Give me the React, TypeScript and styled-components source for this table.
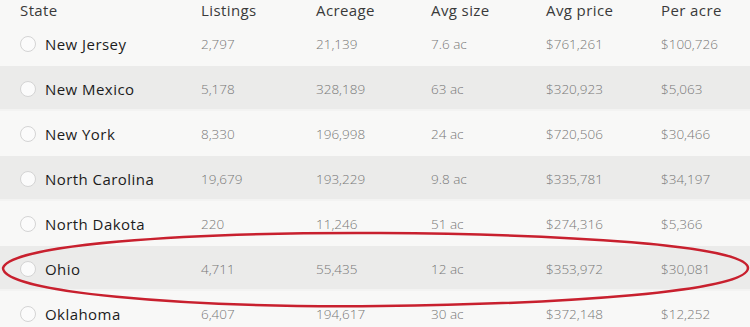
import styled, { createGlobalStyle } from "styled-components";

const rows = [
  ["New Jersey", "2,797", "21,139", "7.6 ac", "$761,261", "$100,726"],
  ["New Mexico", "5,178", "328,189", "63 ac", "$320,923", "$5,063"],
  ["New York", "8,330", "196,998", "24 ac", "$720,506", "$30,466"],
  ["North Carolina", "19,679", "193,229", "9.8 ac", "$335,781", "$34,197"],
  ["North Dakota", "220", "11,246", "51 ac", "$274,316", "$5,366"],
  ["Ohio", "4,711", "55,435", "12 ac", "$353,972", "$30,081"],
  ["Oklahoma", "6,407", "194,617", "30 ac", "$372,148", "$12,252"],
];

const headers = ["State", "Listings", "Acreage", "Avg size", "Avg price", "Per acre"];

const GlobalStyle = createGlobalStyle`
  * { box-sizing: border-box; }
  body {
    margin: 0;
    background: #f8f8f7;
    font-family: "Open Sans", "Noto Sans", sans-serif;
  }
`;

const Page = styled.div`
  position: relative;
  width: 750px;
  height: 327px;
  overflow: hidden;
  background: #f8f8f7;
`;

const Grid = styled.div`
  display: grid;
  grid-template-columns: 201px repeat(5, 115px);
`;

const Row = styled.div<{ $shaded?: boolean; $head?: boolean }>`
  display: contents;
  & > div {
    height: ${(p) => (p.$head ? "21px" : "45px")};
    background: ${(p) => (p.$shaded ? "#ebebea" : "#f8f8f7")};
    box-shadow: ${(p) => (p.$shaded ? "inset 0 -2px 0 #f3f3f2" : "none")};
  }
`;

const HeadCell = styled.div<{ $first?: boolean }>`
  display: flex;
  align-items: center;
  padding-left: ${(p) => (p.$first ? "20px" : "0")};
  font-size: 15px;
  letter-spacing: 0.4px;
  color: #3a3a3a;
  padding-bottom: 2px;
`;

const StateCell = styled.div`
  display: flex;
  align-items: center;
  gap: 9px;
  padding-left: 20px;
  font-size: 15px;
  letter-spacing: 0.45px;
  color: #1c1c1c;
`;

const Radio = styled.span`
  width: 16px;
  height: 16px;
  border-radius: 50%;
  border: 1px solid #d4d4d4;
  background: #fbfbfb;
  flex-shrink: 0;
`;

const NumCell = styled.div`
  display: flex;
  align-items: center;
  font-size: 13.5px;
  color: #787878;
  font-weight: 300;
`;

const Ring = styled.svg`
  position: absolute;
  left: 0;
  top: 0;
  pointer-events: none;
`;

export default function App() {
  return (
    <Page>
      <GlobalStyle />
      <Grid>
        <Row $head>
          {headers.map((h, i) => (
            <HeadCell key={h} $first={i === 0}>
              {h}
            </HeadCell>
          ))}
        </Row>
        {rows.map((r, i) => (
          <Row key={r[0]} $shaded={i % 2 === 1}>
            <StateCell>
              <Radio />
              {r[0]}
            </StateCell>
            {r.slice(1).map((v, j) => (
              <NumCell key={j}>{v}</NumCell>
            ))}
          </Row>
        ))}
      </Grid>
      <Ring width="750" height="327" viewBox="0 0 750 327">
        <path
          d="M 3 268 C 10 245, 180 232, 380 233 C 560 234, 748 245, 748 268 C 748 292, 560 304, 380 306 C 180 308, 3 292, 3 268 Z"
          fill="none"
          stroke="#c8202e"
          strokeWidth="2.5"
        />
      </Ring>
    </Page>
  );
}
